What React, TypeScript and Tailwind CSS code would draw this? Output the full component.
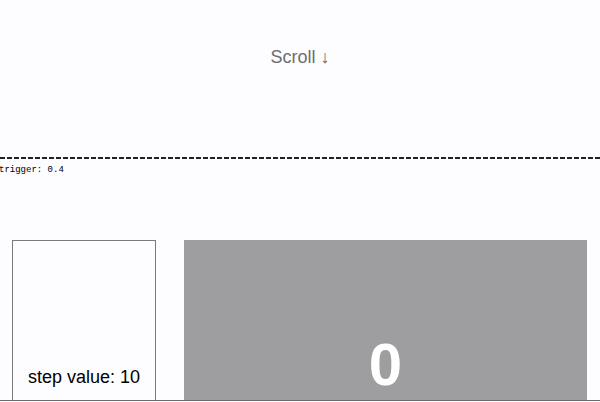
export default function App() {
  const trigger = 0.4
  const stepValue = 10
  const count = 0

  return (
    <div className="h-[402px] w-[600px] overflow-hidden bg-[#fdfcfe] font-['Liberation_Sans',Arial,sans-serif]">
      {/* Intro */}
      <div className="flex h-[157px] justify-center pt-[46px]">
        <p className="text-[18px] leading-[22px] text-[#6d6d6d]">Scroll ↓</p>
      </div>

      {/* Trigger line */}
      <div className="h-[2px] bg-[repeating-linear-gradient(to_right,#222_0_5px,transparent_5px_7px)]" />
      <p className="mt-[6px] -ml-[1px] h-[75px] font-['Liberation_Mono',monospace] text-[9px] leading-[10px] text-black">
        trigger: {trigger}
      </p>

      {/* Steps + sticky graphic */}
      <div className="flex h-[161px] items-stretch border-b border-[#6a6a6a] pl-[12px]">
        <div className="flex w-[144px] flex-col justify-end border-x border-t border-[#7a7a7a] pb-[12px]">
          <p className="text-center text-[18px] leading-[22px] text-black">step value: {stepValue}</p>
        </div>
        <div className="ml-[28px] flex w-[403px] flex-col items-center justify-end bg-[#9e9d9f] pb-[3px]">
          <p className="text-[60px] font-bold leading-[64px] text-white">{count}</p>
        </div>
      </div>
    </div>
  )
}
